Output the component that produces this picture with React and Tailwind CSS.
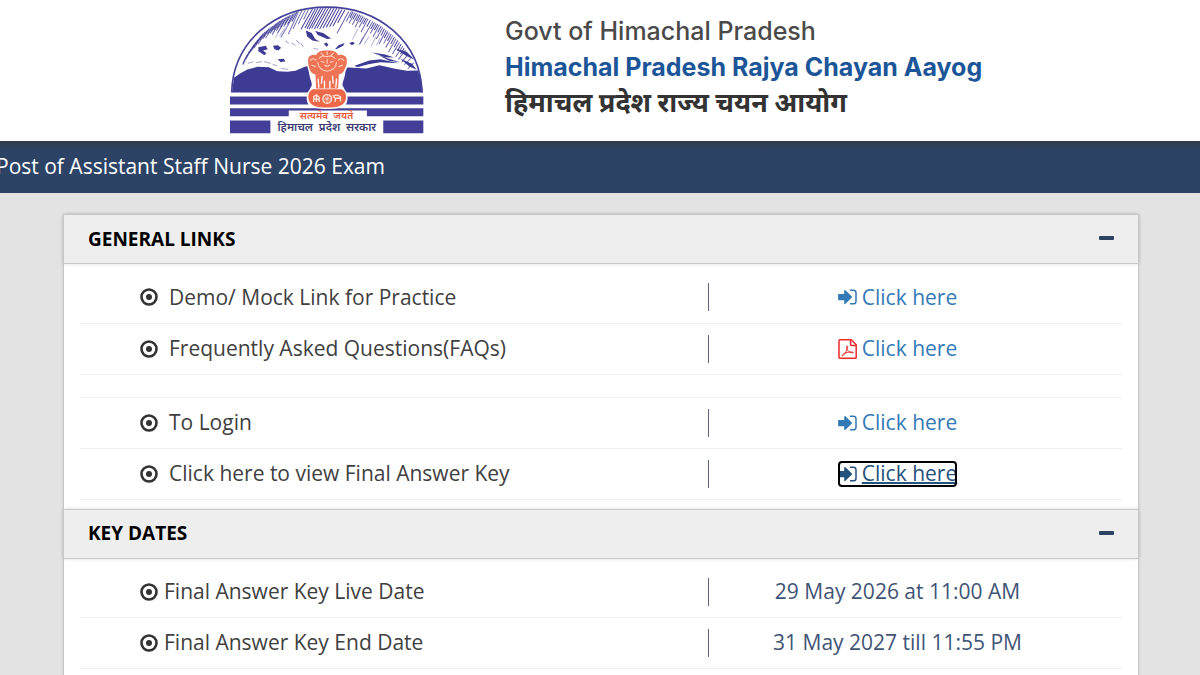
import { useState } from 'react'

const generalLinks = [
  { label: 'Demo/ Mock Link for Practice', icon: 'signin' },
  { label: 'Frequently Asked Questions(FAQs)', icon: 'pdf' },
  null,
  { label: 'To Login', icon: 'signin' },
  { label: 'Click here to view Final Answer Key', icon: 'signin', focused: true },
]

const keyDates = [
  { label: 'Final Answer Key Live Date', value: '29 May 2026 at 11:00 AM' },
  { label: 'Final Answer Key End Date', value: '31 May 2027 till 11:55 PM' },
]

function Emblem() {
  return (
    <svg
      aria-label="Government of Himachal Pradesh emblem"
      className="h-[129px] w-[195px] shrink-0"
      role="img"
      viewBox="28 16 584 386"
    >
      <path d="M36 278C40 125 165 22 321 22s281 103 285 256z" fill="#fff" />
      {/* sky hatching */}
      <g fill="none" stroke="#46439a" strokeLinecap="round" strokeWidth="3">
        <path d="M236 36l-30 66M246 34l-26 52M256 32l-20 40M266 30l-14 28M226 40l-42 72M214 46l-22 34M204 50l-30 48M194 56l-24 36M184 62l-26 40M174 68l-22 32M164 76l-26 38M152 84l-22 32M142 92l-26 40M130 102l-26 42M120 114l-26 40M108 128l-24 40M98 142l-20 36M88 156l-18 38" opacity=".75" />
        <path d="M231 38l-14 26M220 43l-16 30M209 48l-14 26M199 53l-16 28M189 59l-16 26M179 65l-16 24M169 72l-14 22M158 80l-14 22M147 88l-14 22M136 97l-14 22M125 108l-16 26M114 121l-16 26M103 135l-14 24M93 149l-14 26M82 166l-12 24" />
        <path d="M278 28l-34 60M286 28l-30 56M294 26l-32 60M302 26l-34 62M310 25l-34 60M318 25l-34 62M326 25l-34 60M334 25l-34 62M342 26l-32 58M350 26l-30 56M358 28l-28 52M366 30l-26 48M374 32l-20 36" />
        <path d="M386 36l-34 64M394 36l-14 28M404 40l-16 30M414 44l-16 30M424 48l-18 34M434 54l-16 28M444 58l-20 38M458 66l-38 66M468 72l-16 28M478 76l-18 34M488 84l-18 32M498 92l-20 40M508 100l-16 30M518 108l-20 34M528 118l-22 38M538 128l-20 34M548 140l-20 30M556 152l-20 26M564 164l-18 22M572 176l-18 18M580 190l-16 16" opacity=".8" />
        <path d="M399 37l-8 16M409 41l-9 17M419 46l-9 17M429 51l-9 16M439 56l-9 16M451 62l-10 18M463 69l-10 18M473 74l-9 16M483 80l-9 17M493 88l-9 18M503 96l-10 18M513 104l-10 18M523 113l-10 18M533 123l-10 18M543 134l-10 18M552 146l-10 16" />
        <path d="M172 78l-14 28M186 78l-18 34M194 86l-14 22M414 88l-16 30M430 112l-12 22M446 112l-12 20M468 112l-14 26M480 116l-10 20" opacity=".4" />
        <path d="M86 190l14-4M110 188l16-2M134 186l18 4M160 194l12 4M184 206l20 2M198 124l8 6M216 130l10 6M230 122l10 10M244 132l6 8M282 146l20 4" opacity=".45" />
      </g>
      {/* ridge shadows */}
      <g fill="#3d3b94">
        <path d="M116 142l22-4 6 10-14 4 10 8-6 6-18-12zM160 138l14-2 10 8-8 8-12-4zM174 178l18-1 5 7-14 3zM258 92l18 8 10 18 14 8-22-4-16-12zM286 94l24 6 24 16-12 2-28-12zM312 132l8-4 6 7-6 6zM344 150l12-14 18-6-4 8-16 8zM388 130l12-4 4 6-8 4z" />
        <path d="M404 198l44-16 34-4 54 12-56-3-34 6-34 9zM456 158l40 6 26 9-28-1zM478 168l34 10 30 10-34-5zM526 146l34 10 24 24-26-12zM540 176l36 16 14 18-22-10z" />
        <path d="M37 278l6-44 18-13 22-12 30-8 34 1 26 12 30 2 24-3 28-12 26-6 22 8h84l52 3 40-10 46 11 36 6 32-1 10 22 6 44z" />
      </g>
      <path d="M36 278C40 125 165 22 321 22s281 103 285 256" fill="none" stroke="#46439a" strokeWidth="5" />
      <path d="M31 290h579v24H31zM31 325h579v24H31zM31 362h121v38H31zM490 362h120v38H490z" fill="#433f98" />
      <path d="M207 332h234v32H207z" fill="#fff" />
      {/* lion capital */}
      <path d="M260 184c-4-22 14-28 26-24 6-14 20-18 36-16 16-2 30 2 36 16 14-4 32 2 28 24 2 16-8 22-10 36-2 18-8 24-8 36l8 16c10 8 10 38-2 46-20 12-84 12-104 0-12-8-12-38-2-46l8-16c0-12-6-18-8-36-2-14-8-22-8-36z" fill="#fff" />
      <path d="M265 184c-2-16 12-22 24-18 4-12 18-15 33-14 15-1 29 2 33 14 12-4 28 2 26 18 0 14-6 20-8 28-4 8-10 10-16 12l-2 42h-66l-2-42c-6-2-12-4-16-12-2-8-6-14-6-28z" fill="#ee7455" />
      <g fill="none" stroke="#ffd9cd" strokeLinecap="round" strokeWidth="3">
        <path d="M298 176c6-9 14-9 23-5 9-4 18-4 24 5M304 185l9 2M331 187l9-2M315 196c3 4 11 4 14 0M322 178v12M294 188c2 18 16 24 28 26 12-2 26-8 28-26" />
        <path d="M272 182c4-7 12-7 17-1M372 182c-4-7-12-7-17-1M276 196l11 4M368 196l-11 4M304 160l6 8M340 160l-6 8M322 156v8" />
      </g>
      <g fill="none" stroke="#fff" strokeLinecap="round" strokeWidth="4">
        <path d="M295 238l2 24M307 230l-2 20M314 244v20M330 244v20M338 230l2 20M350 238l-2 24" />
      </g>
      <path d="M280 268h84c20 6 20 42-4 50-20 6-56 6-76 0-24-8-24-44-4-50z" fill="#ec6848" />
      <g fill="none" stroke="#ffe5dc" strokeWidth="4">
        <circle cx="322" cy="297" r="13" />
        <path d="M322 284v26M309 297h26M313 288l18 18M331 288l-18 18" strokeWidth="2" />
        <path d="M282 306v-16l8-5 8 7v14M284 298h12M290 286v20M346 306v-10l-6-8 12-3 10 6v14M346 295h16" />
      </g>
      <text
        className="font-['Noto_Sans_Devanagari','Noto_Sans',sans-serif] font-semibold"
        fill="#e9573c"
        fontSize="30"
        textAnchor="middle"
        x="320"
        y="357"
      >
        सत्यमेव&#160; जयते
      </text>
      <text
        className="font-['Noto_Sans_Devanagari','Noto_Sans',sans-serif] font-semibold"
        fill="#3b3a70"
        fontSize="34"
        textAnchor="middle"
        x="321"
        y="393"
      >
        हिमाचल&#160; प्रदेश&#160; सरकार
      </text>
    </svg>
  )
}

function DotCircleIcon() {
  return (
    <svg aria-hidden="true" className="h-[18px] w-[18px] shrink-0" viewBox="0 0 18 18">
      <circle cx="9" cy="9" fill="none" r="7.5" stroke="#333333" strokeWidth="2.6" />
      <circle cx="9" cy="9" fill="#333333" r="3" />
    </svg>
  )
}

function SignInIcon() {
  return (
    <svg aria-hidden="true" className="h-5 w-5 shrink-0" fill="none" viewBox="0 0 20 20">
      <path d="M.8 6.900h5.400V3.600c0-.6.6-.9 1-.5l6.700 6.400c.3.3.3.800 0 1.100l-6.700 6.400c-.4.4-1 .1-1-.5v-3.300H.8c-.4 0-.7-.3-.7-.7V7.600c0-.4.300-.7.700-.7z" fill="currentColor" />
      <path d="M12 3.200h3.400c1.500 0 2.600 1.100 2.600 2.600v8.400c0 1.500-1.100 2.600-2.600 2.600H12" stroke="currentColor" strokeWidth="1.5" />
    </svg>
  )
}

function PdfIcon() {
  return (
    <svg aria-hidden="true" className="h-5 w-5 shrink-0" fill="none" stroke="#ee2a2a" viewBox="0 0 20 20">
      <path d="M1.800.8h11.400l5 5v12.600c0 .5-.3.800-.8.800H1.800c-.5 0-.8-.3-.8-.8V1.600c0-.5.3-.8.8-.8z" strokeWidth="1.5" />
      <path d="M12.600 1v4.700c0 .4.300.7.700.7H18" strokeWidth="1.5" />
      <path d="M9 6.800c-.9 2 .3 4.600 2 5.900 1.300 1 3 1.400 4.400.9-1.500-1.300-6-.5-8.300.5-1.800.8-3.200 2-3 2.900 1.600 0 3.600-3.600 4.600-6 .7-1.700 1-3.400.3-4.200z" strokeWidth="1" />
    </svg>
  )
}

function Panel({ title, children }) {
  const [open, setOpen] = useState(true)

  return (
    <section>
      <h2>
        <button
          aria-expanded={open}
          className="relative flex h-12 w-full items-center justify-between bg-[#eeeeee] px-6 text-[19px] font-bold text-black shadow-[0_0_0_1px_#c8c8c8,0_0_4px_rgba(0,0,0,0.25)]"
          onClick={() => setOpen(!open)}
          type="button"
        >
          {title}
          <svg aria-hidden="true" className="h-4 w-4" viewBox="0 0 16 16">
            <rect fill="#2c4464" height="4" rx="1" width="15" x="1" y="5" />
            {!open && <rect fill="#2c4464" height="15" rx="1" width="4" x="6" />}
          </svg>
        </button>
      </h2>
      {open && <div className="px-4 pt-[9px] pb-[10px]">{children}</div>}
    </section>
  )
}

function Row({ label, wide, children }) {
  return (
    <tr className="h-[51px] border-b border-[#f0f0f0]">
      <th className="w-[628px] pl-[60px] text-left font-normal" scope="row">
        <div className={wide ? 'flex items-center gap-[11px]' : 'flex items-center gap-[6px]'}>
          <DotCircleIcon />
          {label}
        </div>
      </th>
      <td>
        <div className="flex h-7 items-center justify-center border-l border-[#5b6580] pr-9 text-[#3f5476]">
          {children}
        </div>
      </td>
    </tr>
  )
}

function LinkAction({ icon, label, focused }) {
  return (
    <a
      aria-label={`${label}: Click here`}
      className={
        focused
          ? 'flex h-[26px] items-center gap-1 rounded-sm text-[#23527c] underline decoration-2 outline-2 -outline-offset-2 outline-black'
          : 'flex h-[26px] items-center gap-1 text-[#337ab7]'
      }
      href="#"
    >
      {icon === 'pdf' ? <PdfIcon /> : <SignInIcon />}
      Click here
    </a>
  )
}

export default function App() {
  return (
    <div className="h-screen overflow-hidden bg-[#e3e3e3] font-['Open_Sans','Noto_Sans',sans-serif] text-[#404040]">
      <header className="flex h-[141px] items-start bg-white pt-[5px] pl-[19%]">
        <div className="pl-px">
          <Emblem />
        </div>
        <div className="ml-[81px] flex flex-col pt-2 font-['Inter','Noto_Sans_Devanagari',sans-serif] whitespace-nowrap">
          <p className="text-[25px] leading-9 font-medium text-[#4a4a4a]">Govt of Himachal Pradesh</p>
          <p className="text-[25px] leading-9 font-bold text-[#1c5699]">Himachal Pradesh Rajya Chayan Aayog</p>
          <p className="text-[27px] leading-9 font-bold text-[#333333]">हिमाचल प्रदेश राज्य चयन आयोग</p>
        </div>
      </header>

      <div className="flex h-[52px] items-center overflow-hidden bg-linear-to-b from-[#303a48] to-[#2c4366] to-20% text-[21px] whitespace-nowrap text-white">
        <p className="-ml-1">Post of Assistant Staff Nurse 2026 Exam</p>
      </div>

      <main className="mt-[22px] mr-[62px] ml-16 bg-white text-[21px] shadow-[0_0_0_1px_#c8c8c8,0_0_3px_rgba(0,0,0,0.25)]">
        <Panel title="GENERAL LINKS">
          <table className="w-full border-collapse">
            <tbody>
              {generalLinks.map((link, index) =>
                link ? (
                  <Row key={link.label} label={link.label} wide>
                    <LinkAction {...link} />
                  </Row>
                ) : (
                  <tr key={index} className="h-[23px] border-b border-[#f0f0f0]">
                    <td colSpan={2} />
                  </tr>
                ),
              )}
            </tbody>
          </table>
        </Panel>

        <Panel title="KEY DATES">
          <table className="w-full border-collapse">
            <tbody>
              {keyDates.map((date) => (
                <Row key={date.label} label={date.label}>
                  {date.value}
                </Row>
              ))}
            </tbody>
          </table>
        </Panel>
      </main>
    </div>
  )
}
